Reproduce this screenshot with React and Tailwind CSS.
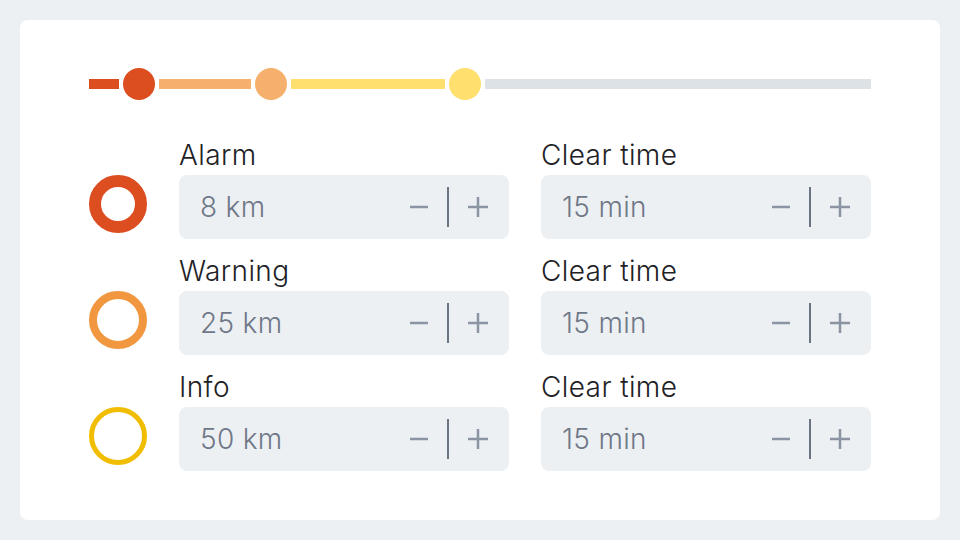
import React from "react";

const rows = [
  { label: "Alarm", value: "8 km", ring: "border-[12px] border-[#dc4d20]" },
  { label: "Warning", value: "25 km", ring: "border-[8px] border-[#f0973f]" },
  { label: "Info", value: "50 km", ring: "border-[5px] border-[#f0bd00]" },
];

function Stepper({ value }) {
  return (
    <div className="flex h-16 items-center rounded-lg bg-[#edf0f3] pl-[21px] pr-[21px]">
      <span className="flex-1 text-[28px] font-light tracking-[0.3px] text-[#6f7888]">{value}</span>
      <svg width="18" height="20" viewBox="0 0 18 20" className="text-[#8b94a2]">
        <line x1="0" y1="10" x2="18" y2="10" stroke="currentColor" strokeWidth="2.5" />
      </svg>
      <span className="mx-[19px] h-10 w-[2px] bg-[#6b7483]" />
      <svg width="20" height="20" viewBox="0 0 20 20" className="text-[#8b94a2]">
        <line x1="0" y1="10" x2="20" y2="10" stroke="currentColor" strokeWidth="2.5" />
        <line x1="10" y1="0" x2="10" y2="20" stroke="currentColor" strokeWidth="2.5" />
      </svg>
    </div>
  );
}

function Field({ label, value }) {
  return (
    <div className="flex w-[330px] flex-col">
      <span className="h-9 text-[28px] font-light leading-[32px] tracking-[0.4px] text-[#1e2226]">
        {label}
      </span>
      <Stepper value={value} />
    </div>
  );
}

export default function App() {
  return (
    <div
      className="flex h-[540px] w-[960px] bg-[#edf0f3] p-5"
      style={{ fontFamily: "Inter, 'Noto Sans', sans-serif" }}
    >
      <div className="flex flex-1 flex-col rounded-lg bg-white px-[69px] pt-12">
        {/* level slider */}
        <div className="flex h-8 items-center gap-1">
          <span className="h-[10px] w-[30px] bg-[#dc4d20]" />
          <span className="h-8 w-8 rounded-full bg-[#dc4d20]" />
          <span className="h-[10px] w-[92px] bg-[#f4b06c]" />
          <span className="h-8 w-8 rounded-full bg-[#f4b06c]" />
          <span className="h-[10px] w-[154px] bg-[#ffdf6e]" />
          <span className="h-8 w-8 rounded-full bg-[#ffdf6e]" />
          <span className="h-[10px] flex-1 bg-[#dde2e7]" />
        </div>

        <div className="mt-[39px] flex flex-col gap-4">
          {rows.map((r) => (
            <div key={r.label} className="flex gap-8">
              <div className="w-[58px] pt-9">
                <div className={`h-[58px] w-[58px] rounded-full ${r.ring}`} />
              </div>
              <Field label={r.label} value={r.value} />
              <Field label="Clear time" value="15 min" />
            </div>
          ))}
        </div>
      </div>
    </div>
  );
}
